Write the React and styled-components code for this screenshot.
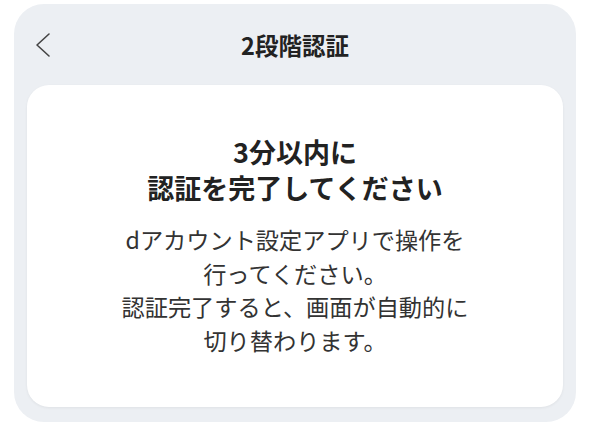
import React from 'react';
import styled, { createGlobalStyle } from 'styled-components';

const GlobalStyle = createGlobalStyle`
	html, body {
		margin: 0;
		padding: 0;
		background: #ffffff;
		font-family: "Noto Sans CJK JP", "Noto Sans", sans-serif;
	}
`;

const Page = styled.div`
	padding: 4px 14px 2px;
`;

const Panel = styled.div`
	background-color: #eceff3;
	border-radius: 30px;
	padding: 0 13px 15px;
`;

const Header = styled.div`
	position: relative;
	height: 81px;
	display: flex;
	align-items: center;
	justify-content: center;
`;

const BackButton = styled.button`
	position: absolute;
	left: 8px;
	top: 50%;
	transform: translateY(-50%);
	border: none;
	background: none;
	padding: 0;
	display: flex;
	color: #444;
	cursor: pointer;
`;

const Title = styled.h1`
	margin: 0;
	font-size: 23.5px;
	font-weight: 700;
	color: #222;
`;

const Card = styled.div`
	background-color: #ffffff;
	border-radius: 22px;
	box-shadow: 0 1px 3px rgba(0, 0, 0, 0.06);
	padding: 49px 20px 50px;
	text-align: center;
`;

const Heading = styled.h2`
	margin: 0 0 17px;
	font-size: 27px;
	line-height: 36px;
	font-weight: 700;
	color: #222;
`;

const Body = styled.p`
	margin: 0;
	font-size: 23.2px;
	line-height: 33.5px;
	color: #333;
`;

const App = () => {
	return (
		<>
			<GlobalStyle />
			<Page>
				<Panel>
					<Header>
						<BackButton aria-label="戻る">
							<svg width="16" height="26" viewBox="0 0 16 26" fill="none">
								<path d="M14 2 L2 13 L14 24" stroke="currentColor" strokeWidth="1.6" strokeLinecap="round" strokeLinejoin="round" />
							</svg>
						</BackButton>
						<Title>2段階認証</Title>
					</Header>
					<Card>
						<Heading>
							3分以内に<br />
							認証を完了してください
						</Heading>
						<Body>
							dアカウント設定アプリで操作を<br />
							行ってください。<br />
							認証完了すると、画面が自動的に<br />
							切り替わります。
						</Body>
					</Card>
				</Panel>
			</Page>
		</>
	);
};

export default App;
